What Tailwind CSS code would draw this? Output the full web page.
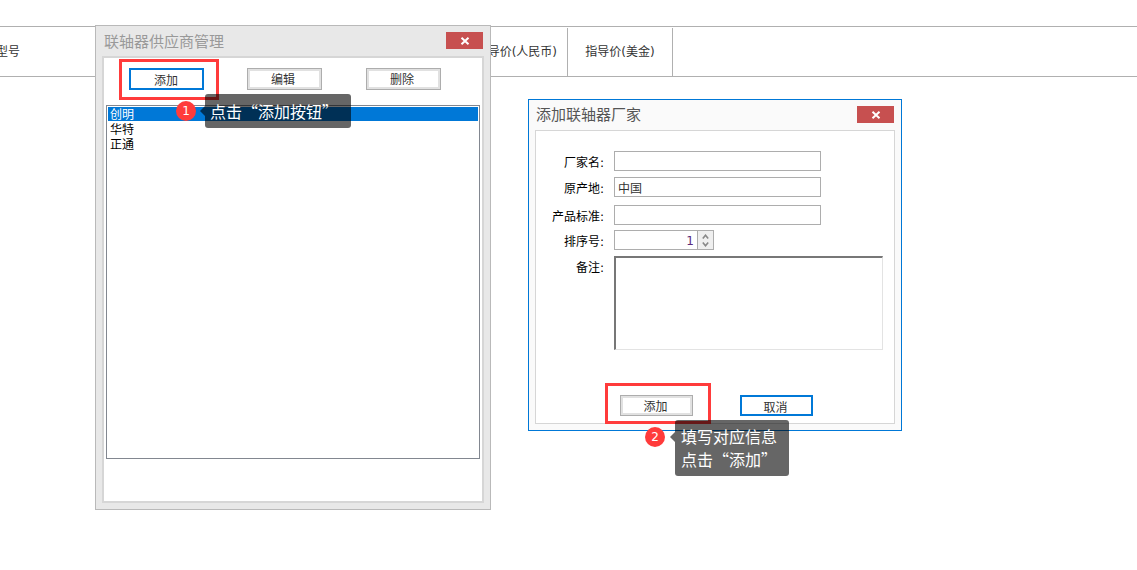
<!DOCTYPE html>
<html lang="zh-CN">
<head>
    <meta charset="UTF-8">
    <meta name="viewport" content="width=device-width, initial-scale=1.0">
    <title>添加联轴器厂家</title>
    <script src="https://cdn.jsdelivr.net/npm/@tailwindcss/browser@4"></script>
</head>
<body class="bg-white">
<div class="relative w-[1137px] h-[570px] overflow-hidden bg-white text-[12px] text-[#333] font-['DejaVu_Sans','Noto_Sans_CJK_SC',sans-serif]">

    <!-- table header behind the windows -->
    <div class="mt-[26px] h-[51px] flex border-y border-[#b0b0b0] -ml-[21px] pt-[1px]">
        <div class="w-[470px] flex items-center pl-[17px]">型号</div>
        <div class="w-[119px] flex items-center justify-end pr-[10px] border-r border-[#b0b0b0]">指导价(人民币)</div>
        <div class="w-[105px] flex items-center justify-center border-r border-[#b0b0b0]">指导价(美金)</div>
    </div>

    <!-- supplier window -->
    <div class="absolute left-[95px] top-[25px] w-[396px] h-[485px] flex flex-col border border-[#b9b9b9] bg-[#e8e8e8] px-[6px] pb-[6px]">
        <div class="h-[30px] flex items-start justify-between">
            <span class="mt-[5px] ml-[2px] text-[15px] leading-[20px] text-[#999] font-['Noto_Sans_CJK_SC',sans-serif]">联轴器供应商管理</span>
            <button class="mt-[6px] mr-[1px] w-[37px] h-[17px] bg-[#c75050] flex items-center justify-center">
                <svg width="10" height="8" viewBox="0 0 10 8"><path d="M1.5 .8 8.5 7.2M8.5 .8 1.5 7.2" stroke="#fff" stroke-width="2" fill="none"/></svg>
            </button>
        </div>
        <div class="flex-1 border-2 border-[#d6d6d6] bg-white flex flex-col px-[2px]">
            <div class="flex pt-[10px] pl-[23px] gap-[43px]">
                <button class="w-[75px] h-[22px] pt-[2px] pr-[1px] border-2 border-[#0078d7] bg-white">添加</button>
                <button class="w-[75px] h-[22px] pt-[2px] pr-[3px] border border-[#adadad] shadow-[inset_0_0_0_2px_#e1e1e1] bg-white">编辑</button>
                <button class="w-[75px] ml-[1px] h-[22px] pt-[2px] pr-[3px] border border-[#adadad] shadow-[inset_0_0_0_2px_#e1e1e1] bg-white">删除</button>
            </div>
            <div class="mt-[15px] w-[374px] h-[354px] border border-[#828790] p-[1px] text-black leading-[17px]">
                <div class="h-[14px] mb-[1px] pl-[2px] bg-[#0078d7] text-white">创明</div>
                <div class="h-[15px] pl-[2px]">华特</div>
                <div class="h-[15px] pl-[2px]">正通</div>
            </div>
        </div>
    </div>

    <!-- add manufacturer window -->
    <div class="absolute left-[528px] top-[99px] w-[374px] h-[332px] flex flex-col border border-[#0078d7] bg-[#fafafa] px-[6px] pb-[6px]">
        <div class="h-[30px] flex items-start justify-between">
            <span class="mt-[4px] ml-[1px] text-[15px] leading-[20px] text-[#555] font-['Noto_Sans_CJK_SC',sans-serif]">添加联轴器厂家</span>
            <button class="mt-[6px] mr-[1px] w-[37px] h-[17px] bg-[#c75050] flex items-center justify-center">
                <svg width="10" height="8" viewBox="0 0 10 8"><path d="M1.5 .8 8.5 7.2M8.5 .8 1.5 7.2" stroke="#fff" stroke-width="2" fill="none"/></svg>
            </button>
        </div>
        <div class="flex-1 border border-[#d6d6d6] bg-white pt-[20px] relative text-black">
            <div class="flex items-center h-[20px]">
                <label class="w-[69px] text-right pt-[4px] pr-[1px]">厂家名:</label>
                <div class="ml-[9px] w-[207px] h-[20px] border border-[#adadad]"></div>
            </div>
            <div class="flex items-center h-[20px] mt-[6px]">
                <label class="w-[69px] text-right pt-[4px] pr-[1px]">原产地:</label>
                <div class="ml-[9px] w-[207px] h-[20px] border border-[#adadad] pl-[3px] leading-[22px] text-[#333]">中国</div>
            </div>
            <div class="flex items-center h-[20px] mt-[8px]">
                <label class="w-[69px] text-right pt-[4px] pr-[1px]">产品标准:</label>
                <div class="ml-[9px] w-[207px] h-[20px] border border-[#adadad]"></div>
            </div>
            <div class="flex items-center h-[20px] mt-[5px]">
                <label class="w-[69px] text-right pt-[4px] pr-[1px]">排序号:</label>
                <div class="ml-[9px] w-[100px] h-[20px] border border-[#adadad] flex">
                    <span class="flex-1 text-right pr-[3px] leading-[21px] text-[#5a2a7a]">1</span>
                    <span class="w-[16px] border-l border-[#adadad] bg-[#efefef] flex flex-col items-center justify-center gap-[3px]">
                        <svg width="7" height="5" viewBox="0 0 7 5"><path d="M.8 4.4 3.5 1.2 6.2 4.4" stroke="#888" stroke-width="1.6" fill="none"/></svg>
                        <svg width="7" height="5" viewBox="0 0 7 5"><path d="M.8 .6 3.5 3.8 6.2 .6" stroke="#888" stroke-width="1.6" fill="none"/></svg>
                    </span>
                </div>
            </div>
            <div class="flex items-start mt-[6px]">
                <label class="w-[69px] text-right mt-[3px] pr-[1px]">备注:</label>
                <div class="ml-[9px] w-[269px] h-[94px] border-t-2 border-l-2 border-r border-b border-t-[#777] border-l-[#777] border-r-[#e3e3e3] border-b-[#e3e3e3]"></div>
            </div>
            <div class="flex mt-[45px] ml-[84px] gap-[47px] text-[#333]">
                <button class="w-[73px] h-[21px] pt-[2px] pr-[2px] border border-[#adadad] shadow-[inset_0_0_0_2px_#e1e1e1] bg-white">添加</button>
                <button class="w-[73px] h-[21px] pt-[2px] pr-[2px] border-2 border-[#0078d7] bg-white">取消</button>
            </div>
        </div>
    </div>

    <!-- callout 1 -->
    <div class="absolute left-[119px] top-[59px] w-[100px] h-[41px] border-[3px] border-[#ff3b3b]"></div>
    <div class="absolute left-[176px] top-[101px] w-[20px] h-[20px] rounded-full bg-[#ff3b3b] text-white text-[12px] leading-[20px] text-center">1</div>
    <div class="absolute left-[200px] top-[106px] w-0 h-0 border-y-[5px] border-y-transparent border-r-[5px] border-r-black/60"></div>
    <div class="absolute left-[205px] top-[94px] w-[146px] h-[34px] rounded-[3px] bg-black/60 text-white text-[16px] leading-[34px] pl-[5px] font-['Noto_Sans_CJK_SC',sans-serif]">点击“添加按钮”</div>

    <!-- callout 2 -->
    <div class="absolute left-[605px] top-[383px] w-[106px] h-[41px] border-[3px] border-[#ff3b3b]"></div>
    <div class="absolute left-[645px] top-[427px] w-[20px] h-[20px] rounded-full bg-[#ff3b3b] text-white text-[12px] leading-[20px] text-center">2</div>
    <div class="absolute left-[670px] top-[432px] w-0 h-0 border-y-[5px] border-y-transparent border-r-[5px] border-r-black/60"></div>
    <div class="absolute left-[675px] top-[420px] w-[114px] h-[56px] rounded-[3px] bg-black/60 text-white text-[16px] leading-[23px] pl-[6px] pt-[5px] font-['Noto_Sans_CJK_SC',sans-serif]">填写对应信息<br>点击“添加”</div>
</div>
</body>
</html>
